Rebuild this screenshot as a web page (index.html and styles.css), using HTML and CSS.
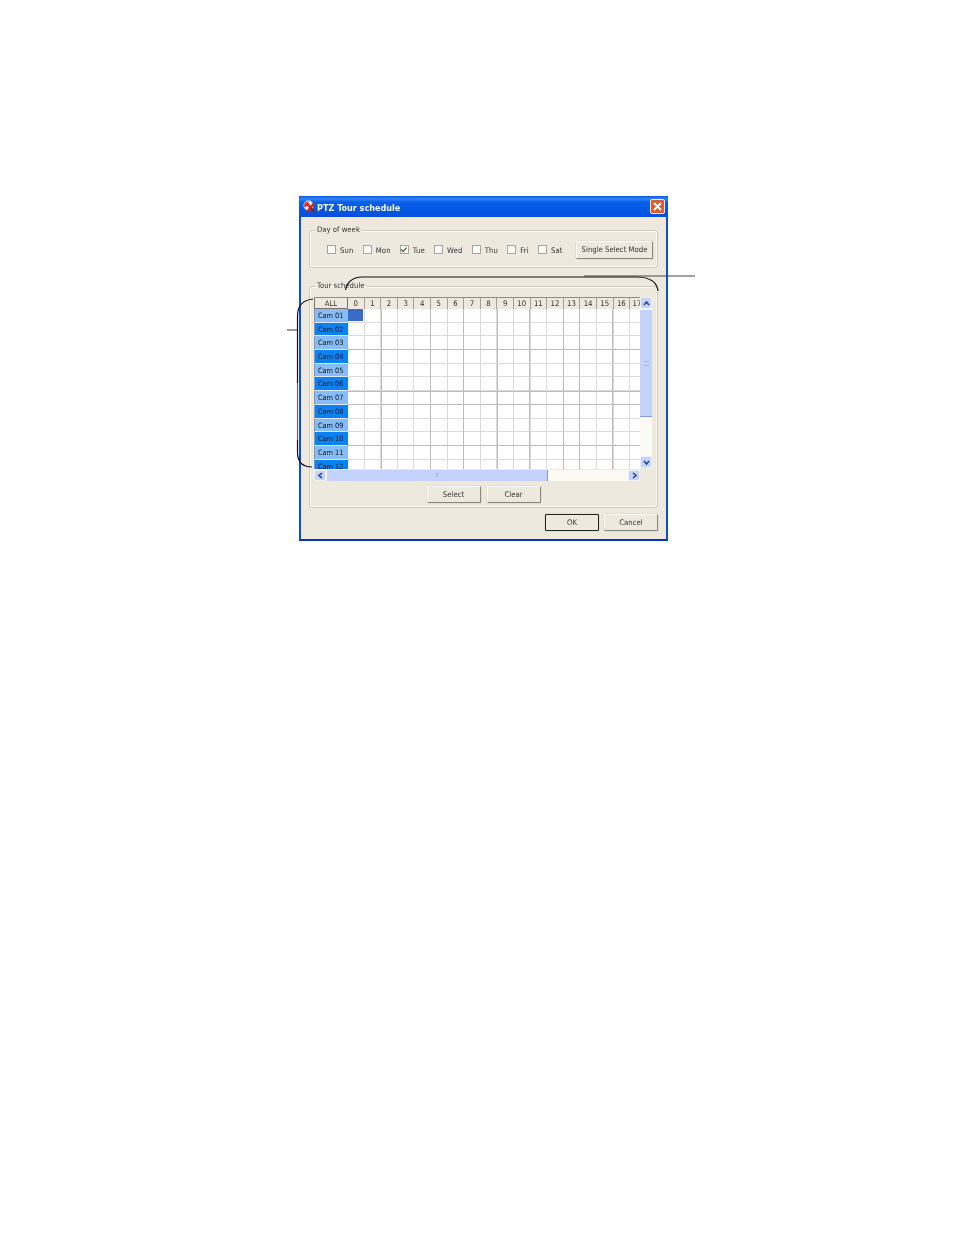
FILE: index.html
```html
<!DOCTYPE html>
<html lang="en">
<head>
<meta charset="utf-8">
<title>PTZ Tour schedule</title>
<link rel="stylesheet" href="styles.css">
</head>
<body>
<main class="figure">
  <section class="window">
    <header class="titlebar">
      <svg class="app-icon" width="13" height="13" viewBox="0 0 13 13"><circle cx="5.5" cy="5.5" r="5" fill="#f6e6e0"/><path d="M5.5 1.2 A4.3 4.3 0 0 0 1.6 7.5 L5 5.5 Z" fill="#d8382a"/><path d="M4.5 4 L11 12 M11 3.5 L4 12" stroke="#c8281c" stroke-width="2.4"/><path d="M8.2 8.5 L11.5 12.5" stroke="#3a1a1a" stroke-width="1"/></svg>
      <h1 class="title">PTZ Tour schedule</h1>
      <button class="close" aria-label="Close"><svg width="11" height="11" viewBox="0 0 11 11"><path d="M2 2 L9 9 M9 2 L2 9" stroke="#fff" stroke-width="2"/></svg></button>
    </header>
    <div class="client">
      <fieldset class="group days">
        <legend>Day of week</legend>
        <div class="day-row">
          <label class="day"><span class="check"></span>Sun</label>
          <label class="day"><span class="check"></span>Mon</label>
          <label class="day"><span class="check"><svg width="8" height="8" viewBox="0 0 8 8"><path d="M1.2 3.4 L3 5.6 L6.6 1.6" fill="none" stroke="#3a5a3a" stroke-width="1.3"/></svg></span>Tue</label>
          <label class="day"><span class="check"></span>Wed</label>
          <label class="day"><span class="check"></span>Thu</label>
          <label class="day"><span class="check"></span>Fri</label>
          <label class="day"><span class="check"></span>Sat</label>
          <button class="btn btn-mode">Single Select Mode</button>
        </div>
      </fieldset>
      <fieldset class="group schedule">
        <legend>Tour schedule</legend>
        <div class="grid-widget">
          <div class="grid-main">
            <div class="head-row">
              <div class="head-all">ALL</div>
              <div class="head-cell head-first">0</div><div class="head-cell">1</div><div class="head-cell">2</div><div class="head-cell">3</div><div class="head-cell">4</div><div class="head-cell">5</div><div class="head-cell">6</div><div class="head-cell">7</div><div class="head-cell">8</div><div class="head-cell">9</div><div class="head-cell">10</div><div class="head-cell">11</div><div class="head-cell">12</div><div class="head-cell">13</div><div class="head-cell">14</div><div class="head-cell">15</div><div class="head-cell">16</div><div class="head-cell head-clip">17</div>
            </div>
            <div class="grid-body">
              <div class="cams">
                <div class="cam">Cam 01</div><div class="cam">Cam 02</div><div class="cam">Cam 03</div><div class="cam">Cam 04</div><div class="cam">Cam 05</div><div class="cam">Cam 06</div><div class="cam">Cam 07</div><div class="cam">Cam 08</div><div class="cam">Cam 09</div><div class="cam">Cam 10</div><div class="cam">Cam 11</div><div class="cam">Cam 12</div>
              </div>
              <div class="cells"><div class="selected"></div></div>
            </div>
            <div class="hscroll">
              <div class="sb-btn sb-h"><svg width="7" height="7" viewBox="0 0 7 7"><path d="M5 1 L2 3.5 L5 6" class="arrow"/></svg></div>
              <div class="h-thumb"><span class="grip">II</span></div>
              <div class="h-track"></div>
              <div class="sb-btn sb-h"><svg width="7" height="7" viewBox="0 0 7 7"><path d="M2 1 L5 3.5 L2 6" class="arrow"/></svg></div>
            </div>
          </div>
          <div class="vscroll">
            <div class="sb-btn sb-v"><svg width="7" height="7" viewBox="0 0 7 7"><path d="M1 5 L3.5 2 L6 5" class="arrow"/></svg></div>
            <div class="v-thumb"><span class="v-grip"></span></div>
            <div class="v-track"></div>
            <div class="sb-btn sb-v"><svg width="7" height="7" viewBox="0 0 7 7"><path d="M1 2 L3.5 5 L6 2" class="arrow"/></svg></div>
          </div>
        </div>
        <div class="grid-actions">
          <button class="btn btn-std">Select</button>
          <button class="btn btn-std">Clear</button>
        </div>
      </fieldset>
      <div class="dialog-actions">
        <button class="btn btn-std btn-default">OK</button>
        <button class="btn btn-std">Cancel</button>
      </div>
    </div>
  </section>
  <svg class="annotations" width="954" height="600" viewBox="0 0 954 600">
    <path d="M345.5 290 C347 282 352 277.5 362 277 L638 277 C650 277.5 657 282 658 291" fill="none" stroke="#111" stroke-width="1.2"/>
    <path d="M584 276 H695" fill="none" stroke="#444" stroke-width="1"/>
    <path d="M313 299 C303 300 297.5 306 297.5 316 V383" fill="none" stroke="#111" stroke-width="1.2"/>
    <path d="M297.5 383 V440" fill="none" stroke="#666" stroke-width="1.2"/>
    <path d="M297.5 440 V452 C297.5 462 303 467 312 467" fill="none" stroke="#111" stroke-width="1.2"/>
    <path d="M287 330 H297" fill="none" stroke="#333" stroke-width="1"/>
  </svg>
</main>
</body>
</html>
```
FILE: styles.css
```css
html, body {
  margin: 0;
  background: #fff;
}
body {
  height: 1235px;
  overflow: hidden;
  font-family: "DejaVu Sans Condensed", "DejaVu Sans", sans-serif;
  font-stretch: condensed;
}
.figure {
  position: relative;
  padding: 196px 0 0 299px;
}
.window {
  box-sizing: border-box;
  width: 369px;
  height: 345px;
  display: flex;
  flex-direction: column;
  background: #ede9de;
  border: 2px solid #0a4be0;
  border-top: 0;
  border-bottom-color: #0433b8;
  filter: blur(0.25px);
  font-size: 7.7px;
  color: #333;
}
.titlebar {
  flex: none;
  height: 21px;
  margin: 0 -2px;
  padding: 0 3px 0 4px;
  display: flex;
  align-items: center;
  border-radius: 3px 3px 0 0;
  background: linear-gradient(#0a5be6 0, #2f86f5 3px, #0a5fe8 6px, #0055e3 16px, #0a4fd8 21px);
}
.app-icon {
  flex: none;
  margin-right: 1px;
}
.title {
  flex: 1;
  margin: 0;
  padding-top: 2px;
  font-size: 9px;
  font-weight: 700;
  color: #f2f5fc;
}
.close {
  flex: none;
  width: 15px;
  height: 15px;
  padding: 1px;
  margin: 0 0 0 0;
  display: flex;
  align-items: center;
  justify-content: center;
  border: 1px solid #f5e5df;
  border-radius: 2px;
  background: #dd5a35;
}
.client {
  flex: 1;
  padding: 8px 8px 0;
  display: flex;
  flex-direction: column;
}
.group {
  box-sizing: border-box;
  margin: 0;
  padding: 0;
  min-width: 0;
  border: 1px solid #d0cdbc;
  border-radius: 3px;
  box-shadow: inset 0 0 0 1px #fbfaf5;
}
.group legend {
  margin-left: 6px;
  padding: 0 1px;
  font-size: 7.7px;
  line-height: 10px;
}
.days {
  height: 43px;
}
.schedule {
  height: 227px;
  margin-top: 13px;
}
.day-row {
  display: flex;
  align-items: center;
  gap: 9.2px;
  padding: 6px 4px 0 17px;
}
.day {
  display: flex;
  align-items: center;
  gap: 4px;
  letter-spacing: 0.12px;
}
.check {
  box-sizing: border-box;
  width: 9px;
  height: 9px;
  display: block;
  flex: none;
  margin-top: -1px;
  border: 1px solid #a5a59a;
  background: #fff;
}
.check svg {
  display: block;
  margin: -0.5px;
}
.btn {
  box-sizing: border-box;
  padding: 0 0 2px;
  font: inherit;
  color: inherit;
  border: 1px solid;
  border-color: #fff #8a8778 #8a8778 #fff;
  border-radius: 1px;
  background: #ede9de;
  box-shadow: 0 0 0 0.5px #d8d5c4;
}
.btn-mode {
  width: 77px;
  height: 18px;
  margin-left: auto;
}
.btn-std {
  width: 54px;
  height: 17px;
  padding-bottom: 0;
}
.btn-default {
  border-color: #222;
}
.grid-widget {
  width: 339px;
  height: 184px;
  margin: 6px 4px 0;
  display: flex;
}
.grid-main {
  width: 326px;
  flex: none;
  display: flex;
  flex-direction: column;
}
.head-row {
  box-sizing: border-box;
  flex: none;
  height: 12px;
  display: flex;
  overflow: hidden;
  line-height: 11px;
  text-align: center;
  border-top: 1px solid #8f8d80;
}
.head-all {
  box-sizing: border-box;
  flex: none;
  width: 34px;
  border: 1px solid #77756a;
  border-top: 0;
}
.head-cell {
  box-sizing: border-box;
  flex: none;
  width: 16.6px;
  border-right: 1px solid #a3a196;
}
.head-clip {
  width: 10px;
  border-right: 0;
  overflow: hidden;
  text-align: left;
  padding-left: 2.5px;
  white-space: nowrap;
}
.grid-body {
  flex: none;
  height: 160px;
  display: flex;
  overflow: hidden;
}
.cams {
  flex: none;
  width: 34px;
}
.cam {
  box-sizing: border-box;
  height: 13.7px;
  padding-left: 3px;
  line-height: 13.5px;
  font-size: 7.3px;
  color: #111;
  background: #0a82f2;
  border-left: 1px solid #8a98a8;
  border-bottom: 1px solid #dfe6ee;
}
.cam:nth-child(odd) {
  background: #86bcf8;
}
.cells {
  flex: 1;
  position: relative;
  background-color: #fff;
  background-image:
    linear-gradient(#bcbcbc, #bcbcbc), linear-gradient(#bcbcbc, #bcbcbc), linear-gradient(#bcbcbc, #bcbcbc), linear-gradient(#bcbcbc, #bcbcbc),
    linear-gradient(90deg, #bcbcbc, #bcbcbc), linear-gradient(90deg, #bcbcbc, #bcbcbc), linear-gradient(90deg, #bcbcbc, #bcbcbc), linear-gradient(90deg, #bcbcbc, #bcbcbc),
    linear-gradient(90deg, #bcbcbc, #bcbcbc), linear-gradient(90deg, #bcbcbc, #bcbcbc), linear-gradient(90deg, #bcbcbc, #bcbcbc), linear-gradient(90deg, #bcbcbc, #bcbcbc),
    repeating-linear-gradient(transparent 0, transparent 12.7px, #dadada 12.7px, #dadada 13.7px),
    repeating-linear-gradient(90deg, transparent 0, transparent 15.6px, #dadada 15.6px, #dadada 16.6px);
  background-repeat: no-repeat;
  background-size:
    100% 1px, 100% 1px, 100% 1px, 100% 1px,
    1px 100%, 1px 100%, 1px 100%, 1px 100%,
    1px 100%, 1px 100%, 1px 100%, 1px 100%,
    100% 100%, 100% 100%;
  background-position:
    0 40px, 0 82px, 0 95px, 0 136px,
    33px 0, 82px 0, 115px 0, 149px 0,
    181px 0, 215px 0, 231px 0, 264px 0,
    0 0, 0 0;
}
.selected {
  width: 15px;
  height: 12px;
  background: #3a6cc6;
}
.hscroll {
  flex: none;
  height: 11px;
  margin-top: 1px;
  display: flex;
  background: #faf9f4;
}
.sb-btn {
  box-sizing: border-box;
  flex: none;
  display: flex;
  align-items: center;
  justify-content: center;
  background: #c3d3fa;
  border: 1px solid #eef2fd;
  border-radius: 2px;
}
.sb-h {
  width: 12px;
  height: 11px;
}
.sb-v {
  width: 12px;
  height: 12px;
}
.arrow {
  fill: none;
  stroke: #2a3f7c;
  stroke-width: 1.5;
}
.h-thumb {
  box-sizing: border-box;
  flex: none;
  width: 221px;
  margin-left: 1px;
  text-align: center;
  font-size: 6px;
  line-height: 10px;
  color: #8ea6e0;
  background: #c3d3fb;
  border-right: 1px solid #7f9ee8;
}
.h-track {
  flex: 1;
}
.vscroll {
  width: 12px;
  height: 171px;
  flex: none;
  display: flex;
  flex-direction: column;
  background: #faf9f4;
}
.v-thumb {
  box-sizing: border-box;
  flex: none;
  height: 107px;
  margin-top: 1px;
  display: flex;
  align-items: center;
  justify-content: center;
  background: #c3d3fb;
  border-bottom: 1px solid #7f9ee8;
}
.v-grip {
  width: 5px;
  height: 3px;
  border-top: 1px solid #9fb5ee;
  border-bottom: 1px solid #9fb5ee;
}
.v-track {
  flex: 1;
}
.grid-actions {
  display: flex;
  justify-content: center;
  gap: 6px;
  margin-top: 5px;
}
.dialog-actions {
  display: flex;
  justify-content: flex-end;
  gap: 5px;
  margin-top: 6px;
}
.annotations {
  position: absolute;
  left: 0;
  top: 0;
  pointer-events: none;
}
```
